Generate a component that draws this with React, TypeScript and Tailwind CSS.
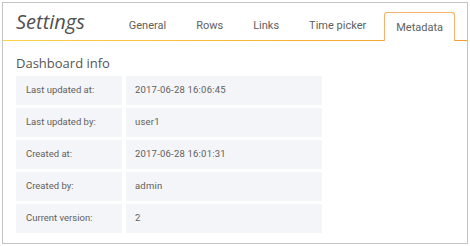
import React from 'react'

const TABS = ['General', 'Rows', 'Links', 'Time picker', 'Metadata']

const ROWS: [string, string][] = [
  ['Last updated at:', '2017-06-28 16:06:45'],
  ['Last updated by:', 'user1'],
  ['Created at:', '2017-06-28 16:01:31'],
  ['Created by:', 'admin'],
  ['Current version:', '2'],
]

export default function App() {
  return (
    <div className="w-[470px] h-[246px] bg-white p-[2px]">
      <div className="h-[242px] border border-[#c4c4c4] bg-white">
        <div className="flex items-end h-[37px] pl-[13px] pr-[12px]">
          <h2 className="self-center text-[20px] italic leading-none text-[#505050] font-['Open_Sans',sans-serif]">
            Settings
          </h2>
          <div className="flex-1" />
          <div className="flex items-end gap-[6px] font-['Roboto',sans-serif] text-[11px] text-[#606060]">
            {TABS.map(tab =>
              tab === 'Metadata' ? (
                <div
                  key={tab}
                  className="relative z-10 mb-[-1px] h-[29px] flex items-center px-[11px] pt-[2px] bg-white border border-b-0 border-[#f5b26a] rounded-t-[3px]"
                >
                  {tab}
                </div>
              ) : (
                <div key={tab} className="h-[28px] flex items-center px-[12px]">
                  {tab}
                </div>
              )
            )}
          </div>
        </div>
        <div className="h-px bg-gradient-to-r from-[#fad34a] to-[#f59b2e]" />
        <div className="px-[13px] pt-[13px]">
          <h3 className="text-[13px] leading-[18px] text-[#555] font-['Open_Sans',sans-serif] mb-[4px]">Dashboard info</h3>
          <div className="grid grid-cols-[106px_196px] gap-x-[4px] gap-y-[3px] font-['Roboto',sans-serif] text-[9.5px] text-[#606060]">
            {ROWS.map(([label, value]) => (
              <React.Fragment key={label}>
                <div className="h-[29px] flex items-center pl-[10px] bg-[#f4f5f8]">{label}</div>
                <div className="h-[29px] flex items-center pl-[9px] bg-[#f4f5f8] tracking-[0.2px]">{value}</div>
              </React.Fragment>
            ))}
          </div>
        </div>
      </div>
    </div>
  )
}
